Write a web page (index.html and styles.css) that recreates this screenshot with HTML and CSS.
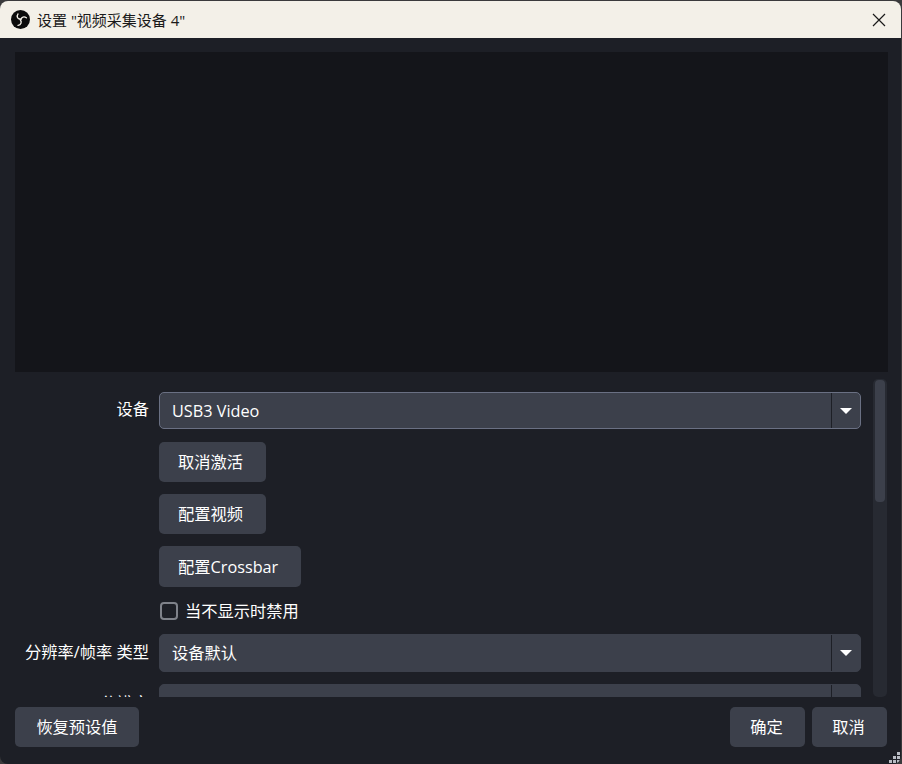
FILE: index.html
```html
<!DOCTYPE html>
<html lang="zh-CN">
<head>
<meta charset="utf-8">
<title>设置</title>
<link rel="stylesheet" href="styles.css">
</head>
<body>
<div class="window">
  <header class="titlebar">
    <svg class="logo" viewBox="0 0 20 20" width="19" height="19">
      <circle cx="10" cy="10" r="10" fill="#0c0c0c"/>
      <g fill="none" stroke="#f3f0e8" stroke-width="1.4" stroke-linecap="round">
        <path d="M9.6 9.6C7 9.4 5.6 6.8 7.4 4.2"/>
        <path d="M10.4 9.8C11 7.4 13.8 6.4 16.2 8.2"/>
        <path d="M10 10.6C11.6 12.6 10.6 15.6 7.4 16.2"/>
        <path d="M9.6 9.6 10.4 9.8 10 10.6Z"/>
      </g>
    </svg>
    <span class="title">设置 "视频采集设备 4"</span>
    <svg class="close" viewBox="0 0 14 14" width="14" height="14">
      <path d="M1 1 13 13M13 1 1 13" stroke="#1a1a1a" stroke-width="1.2" fill="none"/>
    </svg>
  </header>
  <main class="content">
    <div class="preview"></div>
    <div class="props">
      <div class="form">
        <div class="row row-device">
          <label class="label">设备</label>
          <div class="combo combo-focus"><span class="combo-text">USB3 Video</span><span class="combo-arrow"><i class="tri"></i></span></div>
        </div>
        <div class="row row-btn"><span class="label"></span><button class="btn btn-field btn-w107">取消激活</button></div>
        <div class="row row-btn"><span class="label"></span><button class="btn btn-field btn-w107">配置视频</button></div>
        <div class="row row-btn"><span class="label"></span><button class="btn btn-field btn-w142">配置Crossbar</button></div>
        <div class="row row-check"><span class="label"></span><span class="check-box"></span><span class="check-text">当不显示时禁用</span></div>
        <div class="row row-type">
          <label class="label">分辨率/帧率 类型</label>
          <div class="combo"><span class="combo-text combo-text-up">设备默认</span><span class="combo-arrow"><i class="tri"></i></span></div>
        </div>
        <div class="row row-res">
          <label class="label">分辨率</label>
          <div class="combo"><span class="combo-text"></span><span class="combo-arrow"></span></div>
        </div>
      </div>
      <div class="scrollbar"><div class="thumb"></div></div>
    </div>
    <footer class="footer">
      <button class="btn btn-reset">恢复预设值</button>
      <div class="footer-right">
        <button class="btn btn-action">确定</button>
        <button class="btn btn-action">取消</button>
      </div>
    </footer>
    <svg class="grip" viewBox="0 0 12 12" width="12" height="12">
      <g fill="#b9bcc4"><rect x="8" y="0" width="3" height="3"/><rect x="4" y="4" width="3" height="3"/><rect x="8" y="4" width="3" height="3"/><rect x="0" y="8" width="3" height="3"/><rect x="4" y="8" width="3" height="3"/><rect x="8" y="8" width="3" height="3"/></g>
    </svg>
  </main>
</div>
</body>
</html>
```
FILE: styles.css
```css
* { box-sizing: border-box; }
html, body { margin: 0; height: 100%; background: #3a3a3c; }
body { font-family: "Open Sans", "Noto Sans CJK SC", sans-serif; font-size: 16.25px; color: #fff; overflow: hidden; }
.window { width: 901px; height: 763px; display: flex; flex-direction: column; border-radius: 8px; overflow: hidden; margin-top: 1px; }
.titlebar { height: 37px; flex: none; background: #f3f0e8; display: flex; align-items: center; padding: 0 15px 0 11px; color: #1a1a1a; }
.logo { flex: none; margin-right: 7px; }
.title { font-size: 15px; flex: 1; white-space: pre; }
.content { flex: 1; background: #1d1f26; padding: 14px 13px 0 15px; display: flex; flex-direction: column; position: relative; min-height: 0; }
.preview { height: 320px; flex: none; background: #14151a; }
.props { height: 318px; flex: none; margin-top: 7px; display: flex; overflow: hidden; }
.form { width: 846px; flex: none; display: flex; flex-direction: column; padding-top: 13px; }
.row { display: flex; align-items: center; flex: none; }
.label { width: 134px; flex: none; text-align: right; margin-right: 10px; padding-bottom: 5px; white-space: nowrap; }
.row-device { height: 37px; }
.row-btn { margin-top: 13px; margin-bottom: -1px; height: 40px; }
.row-check { height: 20px; margin-top: 16px; }
.row-type { height: 38px; margin-top: 13px; }
.row-res { height: 38px; margin-top: 12px; }
.row-res .label { padding-bottom: 3px; }
.combo { flex: 1; height: 100%; background: #3c404b; border-radius: 5px; display: flex; align-items: center; border: 1px solid #3c404b; }
.combo-focus { border-color: #6a7083; }
.combo-text { flex: 1; padding-left: 12px; }
.combo-text-up { padding-bottom: 2px; }
.combo-arrow { width: 29px; height: 100%; border-left: 1px solid #1d1f26; display: flex; align-items: center; justify-content: center; }
.tri { width: 0; height: 0; border-left: 6px solid transparent; border-right: 6px solid transparent; border-top: 6px solid #fff; }
.btn { font: inherit; color: #fff; background: #3c404b; border: 0; border-radius: 5px; height: 40px; padding: 0 2px 2px 0; }
.btn-field { padding: 0 0 2px 19px; text-align: left; }
.btn-w107 { width: 107px; }
.btn-w142 { width: 142px; height: 41px; padding-bottom: 0; }
.check-box { width: 18px; height: 18px; border: 2px solid #7f828a; border-radius: 4px; margin-left: 1px; margin-right: 7px; flex: none; }
.check-text { line-height: 20px; }
.scrollbar { width: 14px; margin-left: 12px; height: 318px; background: #272a32; border-radius: 5px; padding: 1px 2px; flex: none; }
.thumb { height: 122px; background: #3c404b; border-radius: 4px; }
.footer { height: 40px; flex: none; margin: 10px 1px 0 0; display: flex; justify-content: space-between; }
.footer-right { display: flex; gap: 7px; }
.btn-reset { width: 124px; padding-right: 0; }
.btn-action { width: 75px; }
.grip { position: absolute; right: 0; bottom: 0; }
```
